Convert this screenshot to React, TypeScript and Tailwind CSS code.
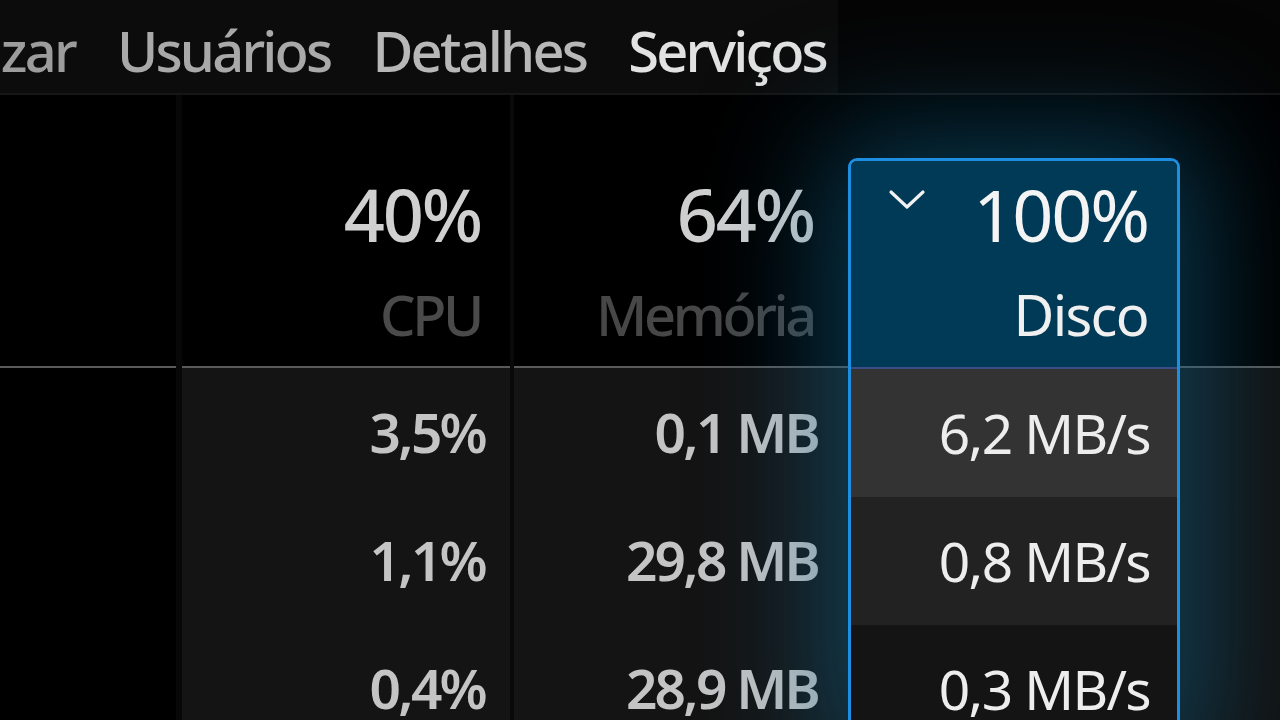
import React from "react";

const font = { fontFamily: '"Noto Sans", "Open Sans", sans-serif' };

const tabs = [
  { label: "Inicializar", color: "text-[#9c9c9c]" },
  { label: "Usuários", color: "text-[#a9a9a9]" },
  { label: "Detalhes", color: "text-[#b8b8b8]" },
  { label: "Serviços", color: "text-[#e2e2e2]" },
];

const cpu = ["3,5%", "1,1%", "0,4%"];
const mem = ["0,1 MB", "29,8 MB", "28,9 MB"];
const disk = [
  { v: "6,2 MB/s", bg: "bg-[#333333]" },
  { v: "0,8 MB/s", bg: "bg-[#222222]" },
  { v: "0,3 MB/s", bg: "bg-[#141414]" },
];

function Chevron() {
  return (
    <svg width="38" height="22" viewBox="0 0 38 22" className="text-[#f2f2f2]">
      <polyline
        points="3,3 19,18 35,3"
        fill="none"
        stroke="currentColor"
        strokeWidth="3.2"
        strokeLinecap="round"
        strokeLinejoin="round"
      />
    </svg>
  );
}

export default function App() {
  return (
    <div
      className="w-[1280px] h-[720px] overflow-hidden bg-black flex flex-col"
      style={font}
    >
      {/* barra de abas */}
      <div className="h-[95px] shrink-0 flex border-b-2 border-[#161616] bg-[#050505]">
        <div className="w-[838px] shrink-0 bg-[#0c0c0c] flex justify-end items-center gap-[42px] pr-[12px] pt-[6px] overflow-hidden whitespace-nowrap">
          {tabs.map((t) => (
            <span
              key={t.label}
              className={`shrink-0 text-[56px] leading-none font-medium tracking-[-0.05em] ${t.color}`}
            >
              {t.label}
            </span>
          ))}
        </div>
      </div>

      {/* colunas */}
      <div className="flex flex-1">
        {/* nome */}
        <div className="w-[176px] shrink-0 flex flex-col">
          <div className="h-[273px] border-b-2 border-[#5a5a5a]" />
        </div>

        {/* CPU */}
        <div className="w-[334px] shrink-0 flex flex-col border-l-[6px] border-[#070707]">
          <div className="h-[273px] border-b-2 border-[#5a5a5a] flex flex-col items-end pr-[29px] pt-[83px]">
            <span className="text-[72px] leading-none font-medium tracking-[-0.03em] text-[#d0d0d0]">
              40%
            </span>
            <span className="mt-[36px] text-[56px] leading-none font-medium tracking-[-0.06em] text-[#4a4a4a]">
              CPU
            </span>
          </div>
          {cpu.map((v) => (
            <div
              key={v}
              className="h-[128px] bg-[#141414] flex items-center justify-end pr-[25px] text-[55px] font-semibold tracking-[-0.05em] text-[#c4c4c4]"
            >
              {v}
            </div>
          ))}
        </div>

        {/* Memória */}
        <div className="w-[338px] shrink-0 flex flex-col border-l-[4px] border-[#090909]">
          <div className="h-[273px] border-b-2 border-[#5a5a5a] flex flex-col items-end pr-[34px] pt-[83px]">
            <span className="text-[72px] leading-none font-medium tracking-[-0.03em] text-[#d0d0d0]">
              64%
            </span>
            <span className="mt-[36px] text-[56px] leading-none font-medium tracking-[-0.06em] text-[#474747]">
              Memória
            </span>
          </div>
          {mem.map((v) => (
            <div
              key={v}
              className="h-[128px] bg-[#141414] flex items-center justify-end pr-[30px] text-[55px] font-semibold tracking-[-0.05em] text-[#c4c4c4]"
            >
              {v}
            </div>
          ))}
        </div>

        {/* Disco */}
        <div className="w-[332px] shrink-0 pt-[63px] relative z-10 flex flex-col">
          <div className="flex-1 flex flex-col border-x-[3px] border-t-[3px] border-[#1e8fe0] rounded-t-[9px] shadow-[0_0_120px_24px_rgba(16,104,146,0.55)]">
            <div className="h-[208px] bg-[#013a56] rounded-t-[6px] border-b-2 border-[#3a4d86] flex flex-col pt-[17px] pl-[37px] pr-[29px]">
              <div className="flex items-start justify-between">
                <div className="pt-[11px]">
                  <Chevron />
                </div>
                <span className="text-[72px] leading-none tracking-[-0.03em] text-[#f4f4f4]">
                  100%
                </span>
              </div>
              <span className="self-end mt-[36px] text-[56px] leading-none tracking-[-0.03em] text-[#f0f0f0]">
                Disco
              </span>
            </div>
            {disk.map((d) => (
              <div
                key={d.v}
                className={`h-[128px] shrink-0 ${d.bg} flex items-center justify-end pr-[27px] text-[55px] tracking-[-0.03em] text-[#ededed]`}
              >
                {d.v}
              </div>
            ))}
          </div>
        </div>

        {/* próxima coluna */}
        <div className="flex-1 flex flex-col">
          <div className="h-[273px] border-b-2 border-[#5a5a5a]" />
          <div className="flex-1 bg-[#121212]" />
        </div>
      </div>
    </div>
  );
}
